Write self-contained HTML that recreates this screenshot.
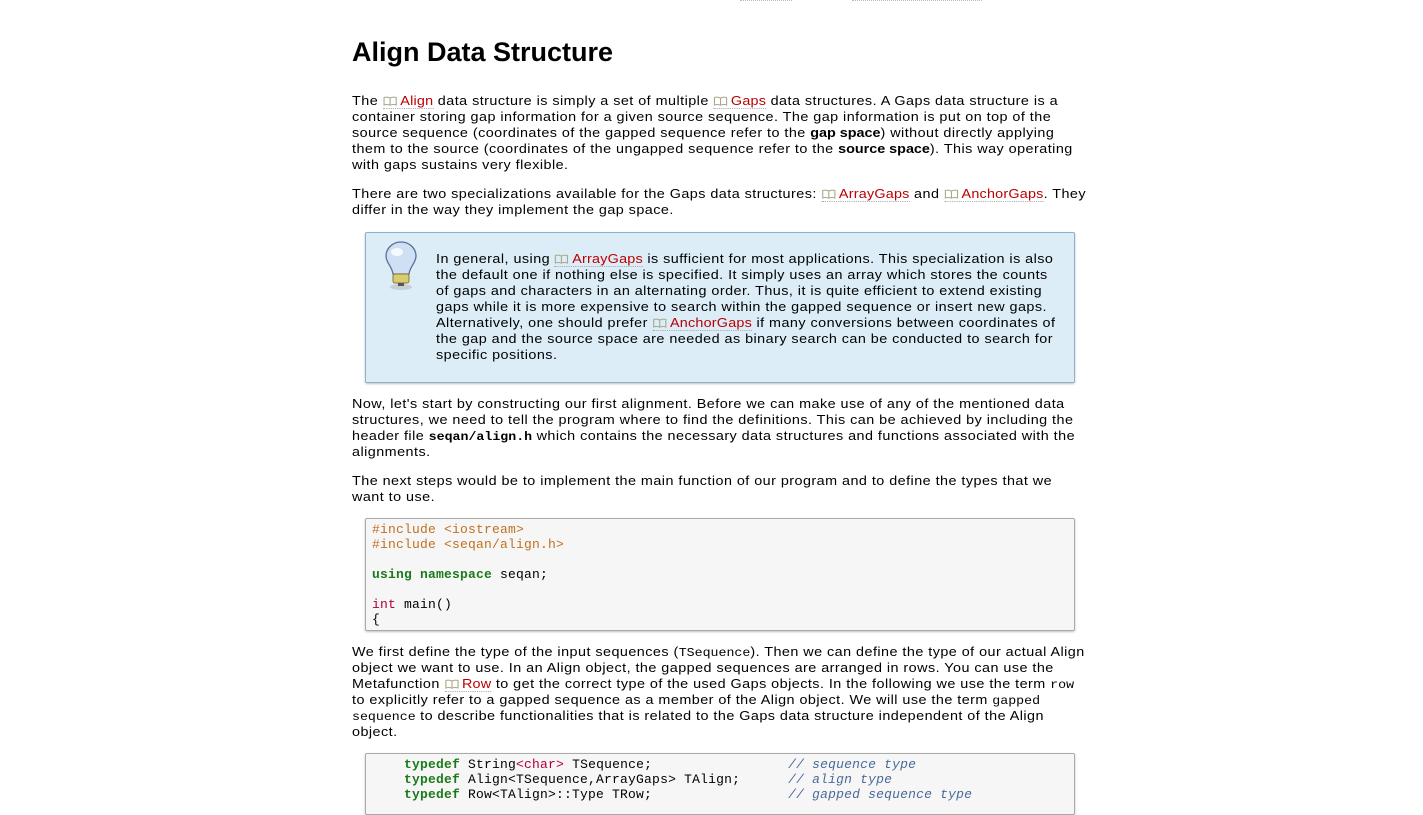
<!DOCTYPE html>
<html><head><meta charset="utf-8"><style>
body{margin:0;background:#fff;width:1423px;height:797px;overflow:hidden;position:relative;font-family:"Liberation Sans",sans-serif;color:#000}
.l{position:absolute;left:352px;font-size:13px;letter-spacing:0.42px;white-space:nowrap;line-height:16px;transform:scaleX(1.105);transform-origin:0 0}
.n{left:436px}
a{color:#b00;text-decoration:none;border-bottom:1px dotted #aaa;letter-spacing:0.2px}
.bk{display:inline-block;width:13px;height:10px;margin-right:3px;vertical-align:-1px}
b{font-weight:bold;letter-spacing:0}
code,.m{font-family:"Liberation Mono",monospace;font-size:12px;letter-spacing:0}
.box{position:absolute;left:365px;width:708px;border:1px solid #aaa;border-radius:2px;box-shadow:0 1px 2px rgba(0,0,0,.25)}
.c{position:absolute;left:372px;font-family:"Liberation Mono",monospace;font-size:13px;letter-spacing:0.2px;white-space:pre;line-height:15px;color:#000}
.pp{color:#c07020}.kw{color:#1a7a1a;font-weight:bold}.ty{color:#b0003a}.cm{color:#4a6a9a;font-style:italic}
</style></head><body>
<div style="position:absolute;left:740px;top:0;width:52px;border-top:1px dotted #bbb"></div>
<div style="position:absolute;left:852px;top:0;width:130px;border-top:1px dotted #bbb"></div>
<svg width="0" height="0" style="position:absolute"><defs><symbol id="b" viewBox="0 0 13 10"><path d="M1 1.5Q3.5 0.5 6.5 2Q9.5 0.5 12 1.5V9Q9.5 8 6.5 9.2Q3.5 8 1 9Z M6.5 2V9.2" fill="none" stroke="#a9a98a" stroke-width="1"/></symbol></defs></svg>
<div style="position:absolute;left:352px;top:37px;font-size:27px;font-weight:bold;letter-spacing:0">Align Data Structure</div>

<div class="l" style="top:93px">The <a><svg class="bk"><use href="#b"/></svg>Align</a> data structure is simply a set of multiple <a><svg class="bk"><use href="#b"/></svg>Gaps</a> data structures. A Gaps data structure is a</div>
<div class="l" style="top:109px">container storing gap information for a given source sequence. The gap information is put on top of the</div>
<div class="l" style="top:125px">source sequence (coordinates of the gapped sequence refer to the <b>gap space</b>) without directly applying</div>
<div class="l" style="top:141px">them to the source (coordinates of the ungapped sequence refer to the <b>source space</b>). This way operating</div>
<div class="l" style="top:157px">with gaps sustains very flexible.</div>

<div class="l" style="top:186px">There are two specializations available for the Gaps data structures: <a><svg class="bk"><use href="#b"/></svg>ArrayGaps</a> and <a><svg class="bk"><use href="#b"/></svg>AnchorGaps</a>. They</div>
<div class="l" style="top:202px">differ in the way they implement the gap space.</div>

<div class="box" style="top:232px;height:149px;background:#dcedf8;border-color:#8fb0cc"></div>
<svg style="position:absolute;left:383px;top:240px" width="36" height="52" viewBox="0 0 36 52">
<ellipse cx="18" cy="47" rx="11" ry="3" fill="#bbb" opacity=".6"/>
<path d="M18 2C9 2 3 9 3 16c0 7 6 10 7 18h16c1-8 7-11 7-18C33 9 27 2 18 2z" fill="#cfe0f4" stroke="#5a6f99" stroke-width="1.3"/>
<ellipse cx="14" cy="12" rx="6" ry="4" fill="#fff" opacity=".8"/>
<rect x="10" y="34" width="16" height="9" rx="2" fill="#d8cc70" stroke="#8a7a30"/>
<rect x="15" y="43" width="6" height="3" fill="#555"/>
</svg>
<div class="l n" style="top:251px">In general, using <a><svg class="bk"><use href="#b"/></svg>ArrayGaps</a> is sufficient for most applications. This specialization is also</div>
<div class="l n" style="top:267px">the default one if nothing else is specified. It simply uses an array which stores the counts</div>
<div class="l n" style="top:283px">of gaps and characters in an alternating order. Thus, it is quite efficient to extend existing</div>
<div class="l n" style="top:299px">gaps while it is more expensive to search within the gapped sequence or insert new gaps.</div>
<div class="l n" style="top:315px">Alternatively, one should prefer <a><svg class="bk"><use href="#b"/></svg>AnchorGaps</a> if many conversions between coordinates of</div>
<div class="l n" style="top:331px">the gap and the source space are needed as binary search can be conducted to search for</div>
<div class="l n" style="top:347px">specific positions.</div>

<div class="l" style="top:396px">Now, let's start by constructing our first alignment. Before we can make use of any of the mentioned data</div>
<div class="l" style="top:412px">structures, we need to tell the program where to find the definitions. This can be achieved by including the</div>
<div class="l" style="top:428px">header file <code><b>seqan/align.h</b></code> which contains the necessary data structures and functions associated with the</div>
<div class="l" style="top:444px">alignments.</div>

<div class="l" style="top:473px">The next steps would be to implement the main function of our program and to define the types that we</div>
<div class="l" style="top:489px">want to use.</div>

<div class="box" style="top:518px;height:111px;background:#f6f6f6"></div>
<div class="c" style="top:522px"><span class="pp">#include &lt;iostream&gt;</span>
<span class="pp">#include &lt;seqan/align.h&gt;</span>

<span class="kw">using</span> <span class="kw">namespace</span> seqan;

<span class="ty">int</span> main()
{</div>

<div class="l" style="top:644px">We first define the type of the input sequences (<code>TSequence</code>). Then we can define the type of our actual Align</div>
<div class="l" style="top:660px">object we want to use. In an Align object, the gapped sequences are arranged in rows. You can use the</div>
<div class="l" style="top:676px">Metafunction <a><svg class="bk"><use href="#b"/></svg>Row</a> to get the correct type of the used Gaps objects. In the following we use the term <code>row</code></div>
<div class="l" style="top:692px">to explicitly refer to a gapped sequence as a member of the Align object. We will use the term <code>gapped</code></div>
<div class="l" style="top:708px"><code>sequence</code> to describe functionalities that is related to the Gaps data structure independent of the Align</div>
<div class="l" style="top:724px">object.</div>

<div class="box" style="top:753px;height:60px;background:#f6f6f6"></div>
<div class="c" style="top:757px">    <span class="kw">typedef</span> String<span class="ty">&lt;char&gt;</span> TSequence;                 <span class="cm">// sequence type</span>
    <span class="kw">typedef</span> Align&lt;TSequence,ArrayGaps&gt; TAlign;      <span class="cm">// align type</span>
    <span class="kw">typedef</span> Row&lt;TAlign&gt;::Type TRow;                 <span class="cm">// gapped sequence type</span></div>
</body></html>
